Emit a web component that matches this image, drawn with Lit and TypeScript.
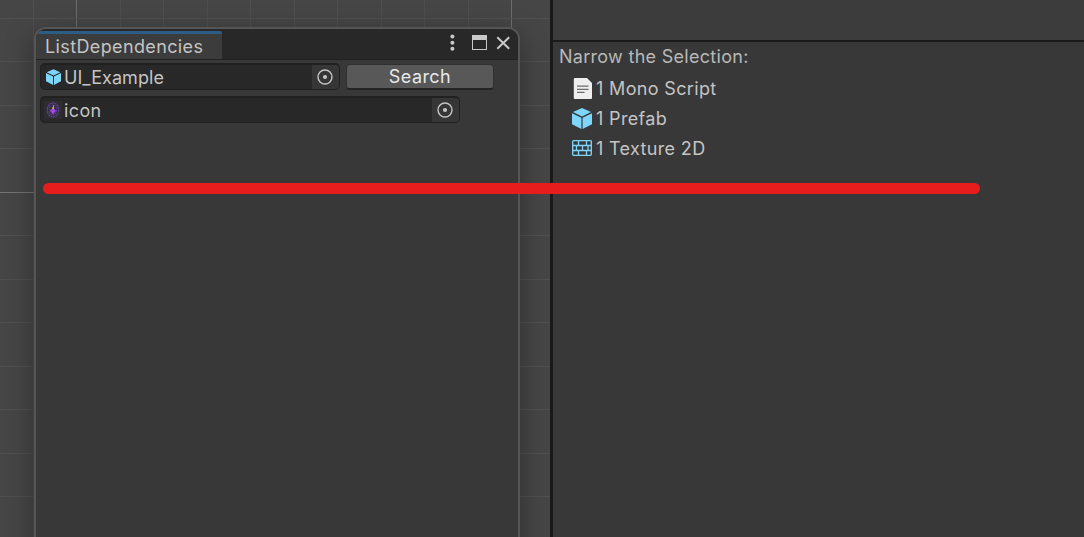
import { LitElement, html, css, svg } from "lit";
import { customElement, property } from "lit/decorators.js";

const cubeIcon = (width: number, height: number) => html`<svg width=${width} height=${height} viewBox="0 0 20 21">
  <path fill="#7fd6fd" d="M10 0 19 4 10 8.4 1 4z" />
  <path fill="#7fd6fd" d="M0 5.2 9.4 9.8V21L0 16.2z" />
  <path fill="#7fd6fd" d="M20 5.2 10.6 9.8V21L20 16.2z" />
</svg>`;

const scriptIcon = html`<svg width="20" height="21" viewBox="0 0 20 21">
  <path fill="#eeeeee" d="M2.8 0H15l5 5V20q0 1-1 1H2.8q-1 0-1-1V1q0-1 1-1z" />
  <path stroke="#6c6c6c" stroke-width="1.2" d="M5 8.2h11.5M5 11.4h11.5M5 14.4h7.5" />
</svg>`;

const textureIcon = html`<svg width="20" height="16" viewBox="0 0 20 16">
  <g fill="none" stroke="#7fd6fd" stroke-width="1.3">
    <rect x=".7" y=".7" width="18.6" height="14.6" rx=".8" />
    <path d="M.7 5.5h18.6M.7 10.5h18.6M6.5 .7v4.8M14.5 .7v4.8M4.5 5.5v5M10.5 5.5v5M16 5.5v5M6.5 10.5v4.8M14.5 10.5v4.8" />
  </g>
</svg>`;

const gemIcon = html`<svg width="18" height="18" viewBox="0 0 18 18">
  <rect width="18" height="18" fill="#2f2d31" />
  <g fill="none" stroke="#66429f" stroke-width="1.2" stroke-dasharray="2 .6">
    <ellipse cx="9" cy="9" rx="5.7" ry="7" />
    <ellipse cx="9" cy="9" rx="3.7" ry="5" stroke="#5a3a8c" />
  </g>
  <path fill="#a647ea" d="M9 6.5 12 9.8 9 13.5 6 9.8z" />
  <path fill="#c9d81f" d="M9.2 4.2H10v3.6H8.2V6.2h1z" />
</svg>`;

const GRID_STEP = 43.54;
const gridLines = (count: number, first: number) =>
  Array.from({ length: count }, (_, i) => Math.floor(first + i * GRID_STEP));

@customElement("object-field")
class ObjectField extends LitElement {
  @property() label = "";

  static styles = css`
    :host {
      box-sizing: border-box;
      display: flex;
      height: 27px;
      border: 1px solid #202020;
      border-width: 2px 1px 1px;
      border-radius: 5px;
      background: #282828;
      overflow: hidden;
    }
    .value {
      flex: 1;
      display: flex;
      align-items: center;
      padding-left: 3px;
    }
    .icon {
      display: flex;
      width: 18px;
      justify-content: center;
      margin-right: 2px;
    }
    .label {
      padding-top: 2px;
    }
    .picker {
      width: 27px;
      box-sizing: border-box;
      padding-right: 2px;
      display: flex;
      align-items: center;
      justify-content: center;
      background: #363636;
    }
  `;

  render() {
    return html`
      <div class="value"><span class="icon"><slot></slot></span><span class="label">${this.label}</span></div>
      <div class="picker">
        <svg width="16" height="16" viewBox="0 0 16 16">
          <circle cx="8" cy="8" r="7" fill="none" stroke="#c4c4c4" stroke-width="1.4" />
          <circle cx="8" cy="8" r="2.1" fill="#c4c4c4" />
        </svg>
      </div>
    `;
  }
}

@customElement("app-root")
class AppRoot extends LitElement {
  static styles = css`
    :host {
      position: relative;
      display: grid;
      grid-template-columns: 550px 3px 1fr;
      width: 1084px;
      height: 537px;
      overflow: hidden;
      color: #c4c4c4;
      font: 400 18px/24px Inter, "Liberation Sans", sans-serif;
      letter-spacing: 0.37px;
      white-space: nowrap;
    }
    svg {
      display: block;
    }
    .scene {
      position: relative;
      box-sizing: border-box;
      height: 537px;
      padding: 27px 30px 0 34px;
      background: #464646;
      overflow: hidden;
    }
    .grid {
      position: absolute;
      inset: 0;
    }
    .window {
      position: relative;
      box-sizing: border-box;
      height: 530px;
      border: 2px solid #555555;
      border-radius: 12px 12px 0 0;
      background: #383838;
      box-shadow: 0 8px 28px rgba(0, 0, 0, 0.36);
      overflow: hidden;
    }
    .titlebar {
      box-sizing: border-box;
      display: flex;
      justify-content: space-between;
      height: 31px;
      padding-top: 2px;
      border-bottom: 1px solid #222222;
      background: #282828;
    }
    .tab {
      box-sizing: border-box;
      width: 186px;
      padding: 1px 0 0 9px;
      border-top: 3px solid #2c5d87;
      border-top-right-radius: 2px;
      background: #3c3c3c;
    }
    .body {
      display: flex;
      flex-direction: column;
      gap: 6px;
      padding: 3px 4px;
    }
    .row {
      display: flex;
      gap: 6px;
    }
    .short {
      width: 300px;
      letter-spacing: 0.05px;
    }
    .long {
      width: 420px;
    }
    .search {
      box-sizing: border-box;
      width: 148px;
      height: 26px;
      margin-top: 1px;
      padding: 0;
      border: 1px solid #303030;
      border-bottom: 2px solid #242424;
      border-radius: 4px;
      background: #585858;
      color: #e8e8e8;
      font: inherit;
      line-height: 23px;
      letter-spacing: 0.42px;
    }
    .divider {
      background: #191919;
    }
    .inspector {
      background: #383838;
    }
    .header {
      height: 40px;
      border-bottom: 2px solid #191919;
      background: #3c3c3c;
    }
    .heading {
      padding: 3px 0 0 6px;
      color: #b8b8b8;
      letter-spacing: 0.29px;
    }
    .types {
      display: grid;
      grid-auto-rows: 30px;
      margin: 4px 0 0;
      padding: 0 0 0 19px;
      list-style: none;
    }
    .type {
      display: flex;
      align-items: center;
      gap: 4px;
      letter-spacing: 0.34px;
    }
    .type span {
      padding-top: 2px;
    }
    .marker {
      position: absolute;
      left: 43px;
      top: 183px;
      width: 937px;
      height: 11px;
      border-radius: 6px;
      background: #e71d1d;
    }
  `;

  render() {
    return html`
      <section class="scene">
        <svg class="grid" width="550" height="537">
          ${gridLines(12, 33).map(
            (x, i) => svg`<rect x=${x} width="1" height="537" fill=${i % 10 === 1 ? "#6c6c6c" : "#4f4f4f"} />`
          )}
          ${gridLines(12, 18).map(
            (y, i) => svg`<rect y=${y} width="550" height="1" fill=${i === 4 ? "#747474" : "#505050"} />`
          )}
        </svg>
        <div class="window">
          <div class="titlebar">
            <div class="tab">ListDependencies</div>
            <svg width="74" height="28" viewBox="444 31 74 28">
              <g fill="#c8c8c8">
                <circle cx="452.4" cy="36.6" r="2" />
                <circle cx="452.4" cy="42.7" r="2" />
                <circle cx="452.4" cy="48.7" r="2" />
                <path fill-rule="evenodd" d="M472 35h15v15h-15zM473 40v9h13v-9z" />
              </g>
              <path d="M497.3 37.2 509.2 48.8M509.2 37.2 497.3 48.8" stroke="#c8c8c8" stroke-width="2" />
            </svg>
          </div>
          <div class="body">
            <div class="row">
              <object-field class="short" label="UI_Example">${cubeIcon(15, 16)}</object-field>
              <button class="search">Search</button>
            </div>
            <object-field class="long" label="icon">${gemIcon}</object-field>
          </div>
        </div>
      </section>
      <div class="divider"></div>
      <section class="inspector">
        <div class="header"></div>
        <div class="heading">Narrow the Selection:</div>
        <ul class="types">
          <li class="type">${scriptIcon}<span>1 Mono Script</span></li>
          <li class="type">${cubeIcon(20, 21)}<span>1 Prefab</span></li>
          <li class="type">${textureIcon}<span>1 Texture 2D</span></li>
        </ul>
      </section>
      <div class="marker"></div>
    `;
  }
}
